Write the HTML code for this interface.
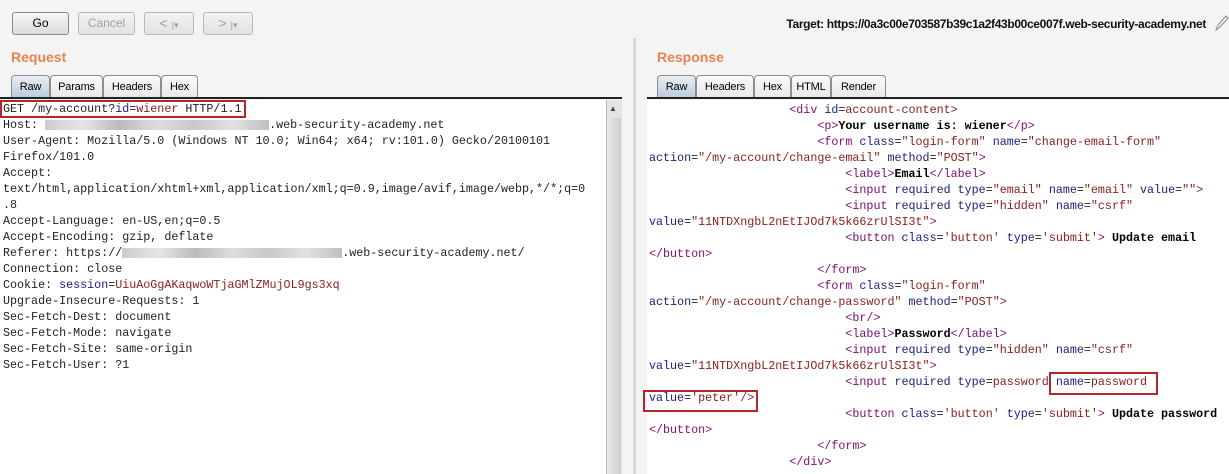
<!DOCTYPE html>
<html><head><meta charset="utf-8"><style>
*{margin:0;padding:0;box-sizing:border-box}
body{width:1229px;height:474px;overflow:hidden;background:#f4f4f4;font-family:"Liberation Sans",sans-serif;position:relative}
.btn{position:absolute;top:12px;height:23px;border:1px solid #8a8a8a;border-radius:3px;background:linear-gradient(#f6f6f6,#dcdcdc);font-size:12px;text-align:center;line-height:21px;color:#000}
.dis{border-color:#b8b8b8;color:#a0a0a0;background:linear-gradient(#f2f2f2,#e2e2e2)}
.h{position:absolute;top:49px;font-size:14px;font-weight:bold;color:#e8834f}
.tab{position:absolute;top:75px;height:23px;border:1px solid #8d8d8d;border-bottom:none;border-radius:4px 4px 0 0;background:linear-gradient(#fafafa,#e8e8e8);font-size:11px;line-height:22px;text-align:center;color:#000;letter-spacing:-0.2px}
.tab.sel{background:linear-gradient(#e8eef4,#b9cbdc)}
.line{position:absolute;top:97px;height:2px;background:#222}
.ed{position:absolute;top:100px;background:#fff;font-family:"Liberation Mono",monospace;font-size:11.7px;line-height:16px;white-space:pre;color:#222}
.t{color:#7a0d7a}.a{color:#1c1c80}.v{color:#8b1c1c}.b{font-weight:bold;color:#000}
.box{position:absolute;border:2px solid #b3262a}
.blur{display:inline-block;height:10px;background:linear-gradient(90deg,#ccc,#e6e6e6,#bbb,#ddd,#c8c8c8,#e2e2e2,#bfbfbf);vertical-align:middle}
</style></head><body>
<div class="btn" style="left:12px;width:57px">Go</div>
<div class="btn dis" style="left:78px;width:57px">Cancel</div>
<div class="btn dis" style="left:144px;width:50px;font-size:14px">&lt; <span style="font-size:9px">|▾</span></div>
<div class="btn dis" style="left:203px;width:50px;font-size:14px">&gt; <span style="font-size:9px">|▾</span></div>
<div style="position:absolute;right:23px;top:17px;font-size:12px;font-weight:bold;color:#111;white-space:nowrap;letter-spacing:-0.35px">Target: https://0a3c00e703587b39c1a2f43b00ce007f.web-security-academy.net</div>
<svg style="position:absolute;left:1213px;top:13px" width="16" height="20"><path d="M3 17 L5 12 L13 3 L15 5 L7 14 Z M3 17 L7 14" fill="none" stroke="#888" stroke-width="1"/></svg>

<div class="h" style="left:11px">Request</div>
<div class="h" style="left:657px">Response</div>

<div class="tab sel" style="left:11px;width:39px">Raw</div>
<div class="tab" style="left:50px;width:53px">Params</div>
<div class="tab" style="left:103px;width:58px">Headers</div>
<div class="tab" style="left:161px;width:37px">Hex</div>
<div class="line" style="left:0;width:622px"></div>

<div class="tab sel" style="left:657px;width:39px">Raw</div>
<div class="tab" style="left:696px;width:58px">Headers</div>
<div class="tab" style="left:754px;width:37px">Hex</div>
<div class="tab" style="left:791px;width:40px">HTML</div>
<div class="tab" style="left:831px;width:55px">Render</div>
<div class="line" style="left:647px;width:582px"></div>

<div style="position:absolute;left:633px;top:38px;width:3px;height:436px;background:#d6d6d6"></div>

<div class="ed" style="left:0;width:606px;height:374px;padding-left:3px;padding-top:1px">GET /my-account?<span class="a">id</span>=<span class="v">wiener</span> HTTP/1.1
Host: <span class="blur" style="width:224px"></span>.web-security-academy.net
User-Agent: Mozilla/5.0 (Windows NT 10.0; Win64; x64; rv:101.0) Gecko/20100101
Firefox/101.0
Accept:
text/html,application/xhtml+xml,application/xml;q=0.9,image/avif,image/webp,*/*;q=0
.8
Accept-Language: en-US,en;q=0.5
Accept-Encoding: gzip, deflate
Referer: https://<span class="blur" style="width:220px"></span>.web-security-academy.net/
Connection: close
Cookie: <span class="a">session</span>=<span class="v">UiuAoGgAKaqwoWTjaGMlZMujOL9gs3xq</span>
Upgrade-Insecure-Requests: 1
Sec-Fetch-Dest: document
Sec-Fetch-Mode: navigate
Sec-Fetch-Site: same-origin
Sec-Fetch-User: ?1</div>
<div style="position:absolute;left:606px;top:100px;width:16px;height:374px;background:#e4e4e4;border-left:1px solid #bbb"></div>
<div style="position:absolute;left:609px;top:104px;width:10px;height:10px;font-size:8px;color:#444">▲</div>
<div style="position:absolute;left:607px;top:118px;width:14px;height:356px;background:linear-gradient(90deg,#e8e8e8,#cfcfcf)"></div>
<div class="box" style="left:0;top:100px;width:246px;height:18px"></div>

<div class="ed" style="left:647px;width:582px;height:374px;padding-left:2px;padding-top:2px">                    <span class="t">&lt;div</span> <span class="a">id</span>=<span class="v">account-content</span><span class="t">&gt;</span>
                        <span class="t">&lt;p&gt;</span><span class="b">Your username is: wiener</span><span class="t">&lt;/p&gt;</span>
                        <span class="t">&lt;form</span> <span class="a">class</span>=<span class="v">"login-form"</span> <span class="a">name</span>=<span class="v">"change-email-form"</span>
<span class="a">action</span>=<span class="v">"/my-account/change-email"</span> <span class="a">method</span>=<span class="v">"POST"</span><span class="t">&gt;</span>
                            <span class="t">&lt;label&gt;</span><span class="b">Email</span><span class="t">&lt;/label&gt;</span>
                            <span class="t">&lt;input</span> <span class="a">required type</span>=<span class="v">"email"</span> <span class="a">name</span>=<span class="v">"email"</span> <span class="a">value</span>=<span class="v">""</span><span class="t">&gt;</span>
                            <span class="t">&lt;input</span> <span class="a">required type</span>=<span class="v">"hidden"</span> <span class="a">name</span>=<span class="v">"csrf"</span>
<span class="a">value</span>=<span class="v">"11NTDXngbL2nEtIJOd7k5k66zrUlSI3t"</span><span class="t">&gt;</span>
                            <span class="t">&lt;button</span> <span class="a">class</span>=<span class="v">'button'</span> <span class="a">type</span>=<span class="v">'submit'</span><span class="t">&gt;</span><span class="b"> Update email</span>
<span class="t">&lt;/button&gt;</span>
                        <span class="t">&lt;/form&gt;</span>
                        <span class="t">&lt;form</span> <span class="a">class</span>=<span class="v">"login-form"</span>
<span class="a">action</span>=<span class="v">"/my-account/change-password"</span> <span class="a">method</span>=<span class="v">"POST"</span><span class="t">&gt;</span>
                            <span class="t">&lt;br/&gt;</span>
                            <span class="t">&lt;label&gt;</span><span class="b">Password</span><span class="t">&lt;/label&gt;</span>
                            <span class="t">&lt;input</span> <span class="a">required type</span>=<span class="v">"hidden"</span> <span class="a">name</span>=<span class="v">"csrf"</span>
<span class="a">value</span>=<span class="v">"11NTDXngbL2nEtIJOd7k5k66zrUlSI3t"</span><span class="t">&gt;</span>
                            <span class="t">&lt;input</span> <span class="a">required type</span>=<span class="v">password</span> <span class="a">name</span>=<span class="v">password</span>
<span class="a">value</span>=<span class="v">'peter'</span><span class="t">/&gt;</span>
                            <span class="t">&lt;button</span> <span class="a">class</span>=<span class="v">'button'</span> <span class="a">type</span>=<span class="v">'submit'</span><span class="t">&gt;</span><span class="b"> Update password</span>
<span class="t">&lt;/button&gt;</span>
                        <span class="t">&lt;/form&gt;</span>
                    <span class="t">&lt;/div&gt;</span></div>
<div class="box" style="left:1049px;top:372px;width:109px;height:23px"></div>
<div class="box" style="left:643px;top:390px;width:115px;height:22px"></div>
</body></html>
